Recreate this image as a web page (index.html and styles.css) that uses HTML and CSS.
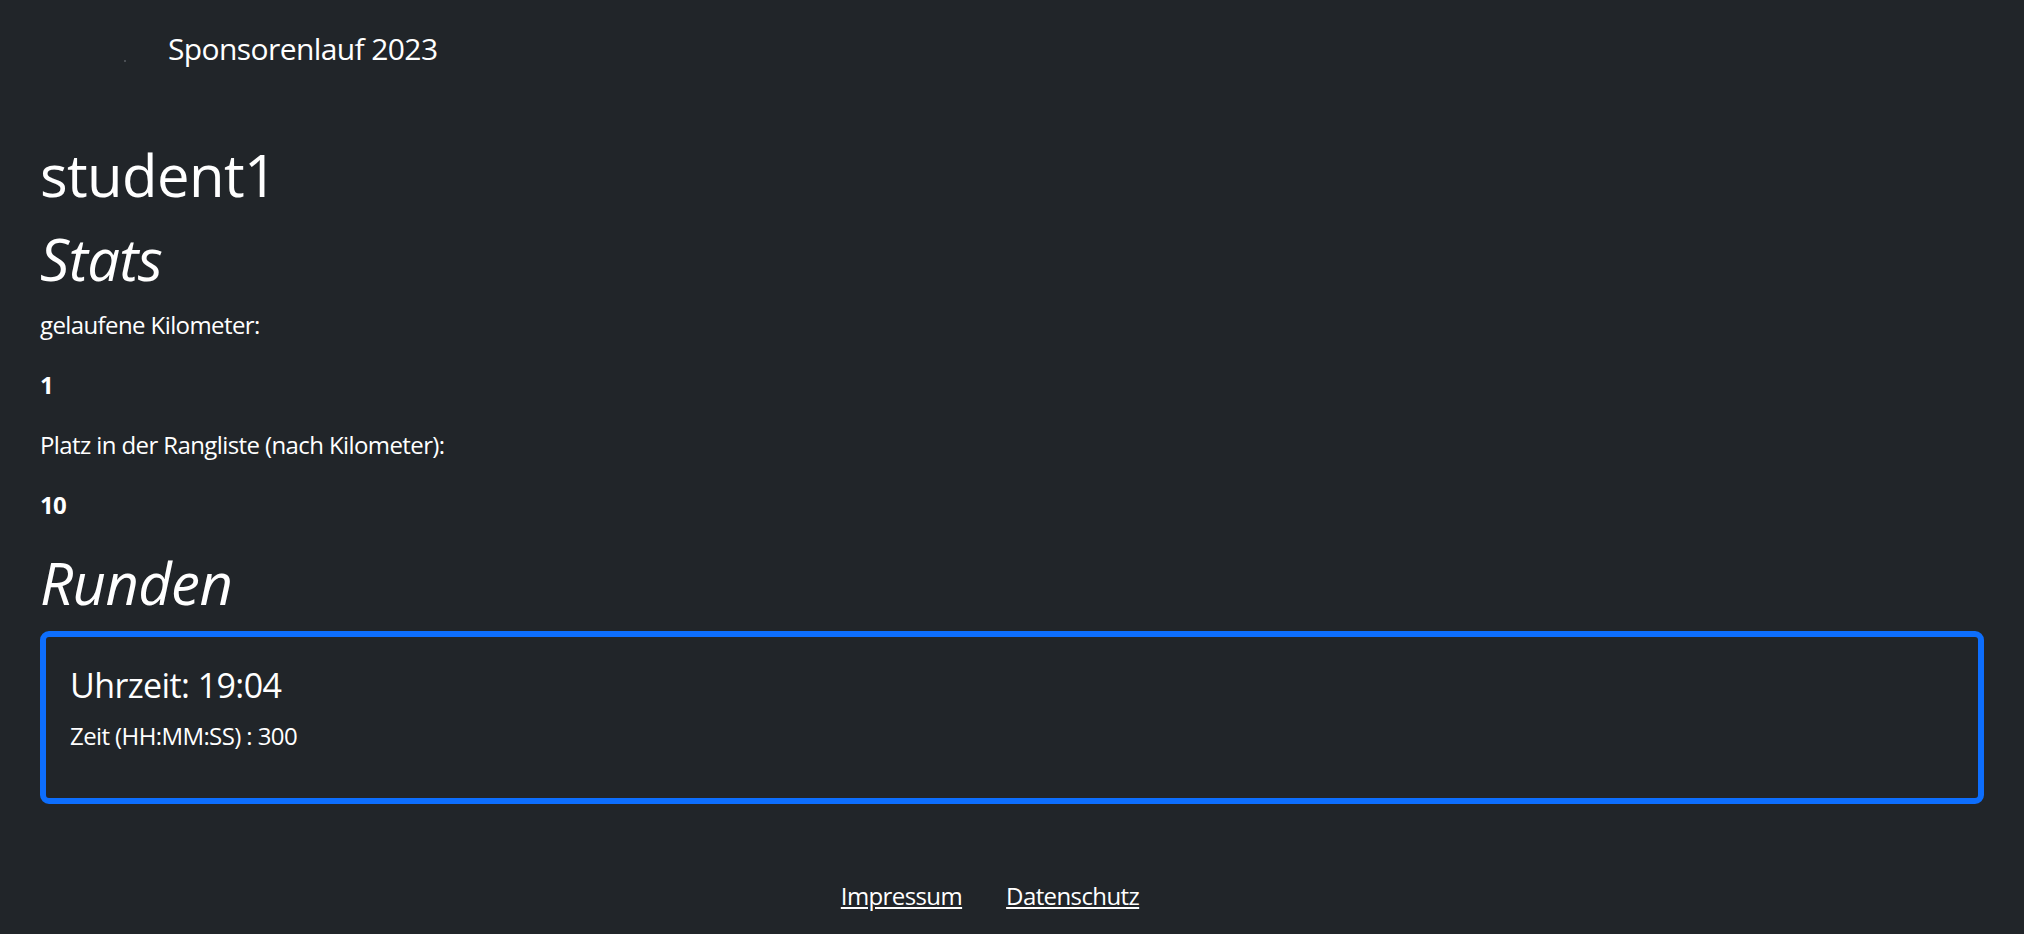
FILE: index.html
```html
<!DOCTYPE html>
<html lang="de">
<head>
<meta charset="utf-8">
<title>Sponsorenlauf 2023</title>
<link rel="stylesheet" href="styles.css">
</head>
<body>
<nav class="navbar">
  <span class="logo"></span>
  <a class="brand" href="#">Sponsorenlauf 2023</a>
</nav>
<main class="content">
  <h1 class="title">student1</h1>
  <h1 class="title title-italic">Stats</h1>
  <p class="text">gelaufene Kilometer:</p>
  <p class="text"><b>1</b></p>
  <p class="text">Platz in der Rangliste (nach Kilometer):</p>
  <p class="text"><b>10</b></p>
  <h1 class="title title-italic">Runden</h1>
  <div class="card">
    <h4 class="card-title">Uhrzeit: 19:04</h4>
    <p class="card-text">Zeit (HH:MM:SS) : 300</p>
  </div>
</main>
<footer class="footer">
  <a class="footer-link" href="#">Impressum</a>
  <a class="footer-link" href="#">Datenschutz</a>
</footer>
</body>
</html>
```
FILE: styles.css
```css
* { box-sizing: border-box; }
html, body { margin: 0; padding: 0; }
body {
  background: #212529;
  color: #ffffff;
  font-family: "Open Sans", "Noto Sans", sans-serif;
  font-size: 24px;
  line-height: 1.5;
  letter-spacing: -0.025em;
  min-height: 934px;
}
.navbar {
  display: flex;
  align-items: center;
  padding: 18px 0 6px 124px;
  height: 84px;
}
.logo {
  display: block;
  width: 2px;
  height: 2px;
  margin-top: 26px;
  background: #4a4e53;
}
.brand {
  color: #ffffff;
  text-decoration: none;
  font-size: 30px;
  line-height: 45px;
  padding: 7px 0;
  margin-left: 42px;
}
.content {
  padding: 55px 40px 0 40px;
}
.title {
  font-size: 58px;
  font-weight: 400;
  line-height: 72px;
  margin: 0 0 12px 0;
}
.title-italic { font-style: italic; }
.text {
  margin: 0 0 24px 0;
}
.card {
  border: 6px solid #0d6efd;
  border-radius: 9px;
  padding: 28px 24px 20px 24px;
}
.card-title {
  font-size: 34px;
  font-weight: 400;
  line-height: 1.2;
  margin: 0 0 12px 0;
}
.card-text {
  margin: 0 0 24px 0;
}
.footer {
  display: flex;
  justify-content: center;
  margin-top: 74px;
}
.footer-link {
  color: #ffffff;
  text-decoration: underline;
  margin-right: 44px;
  margin-left: 0;
}
```
